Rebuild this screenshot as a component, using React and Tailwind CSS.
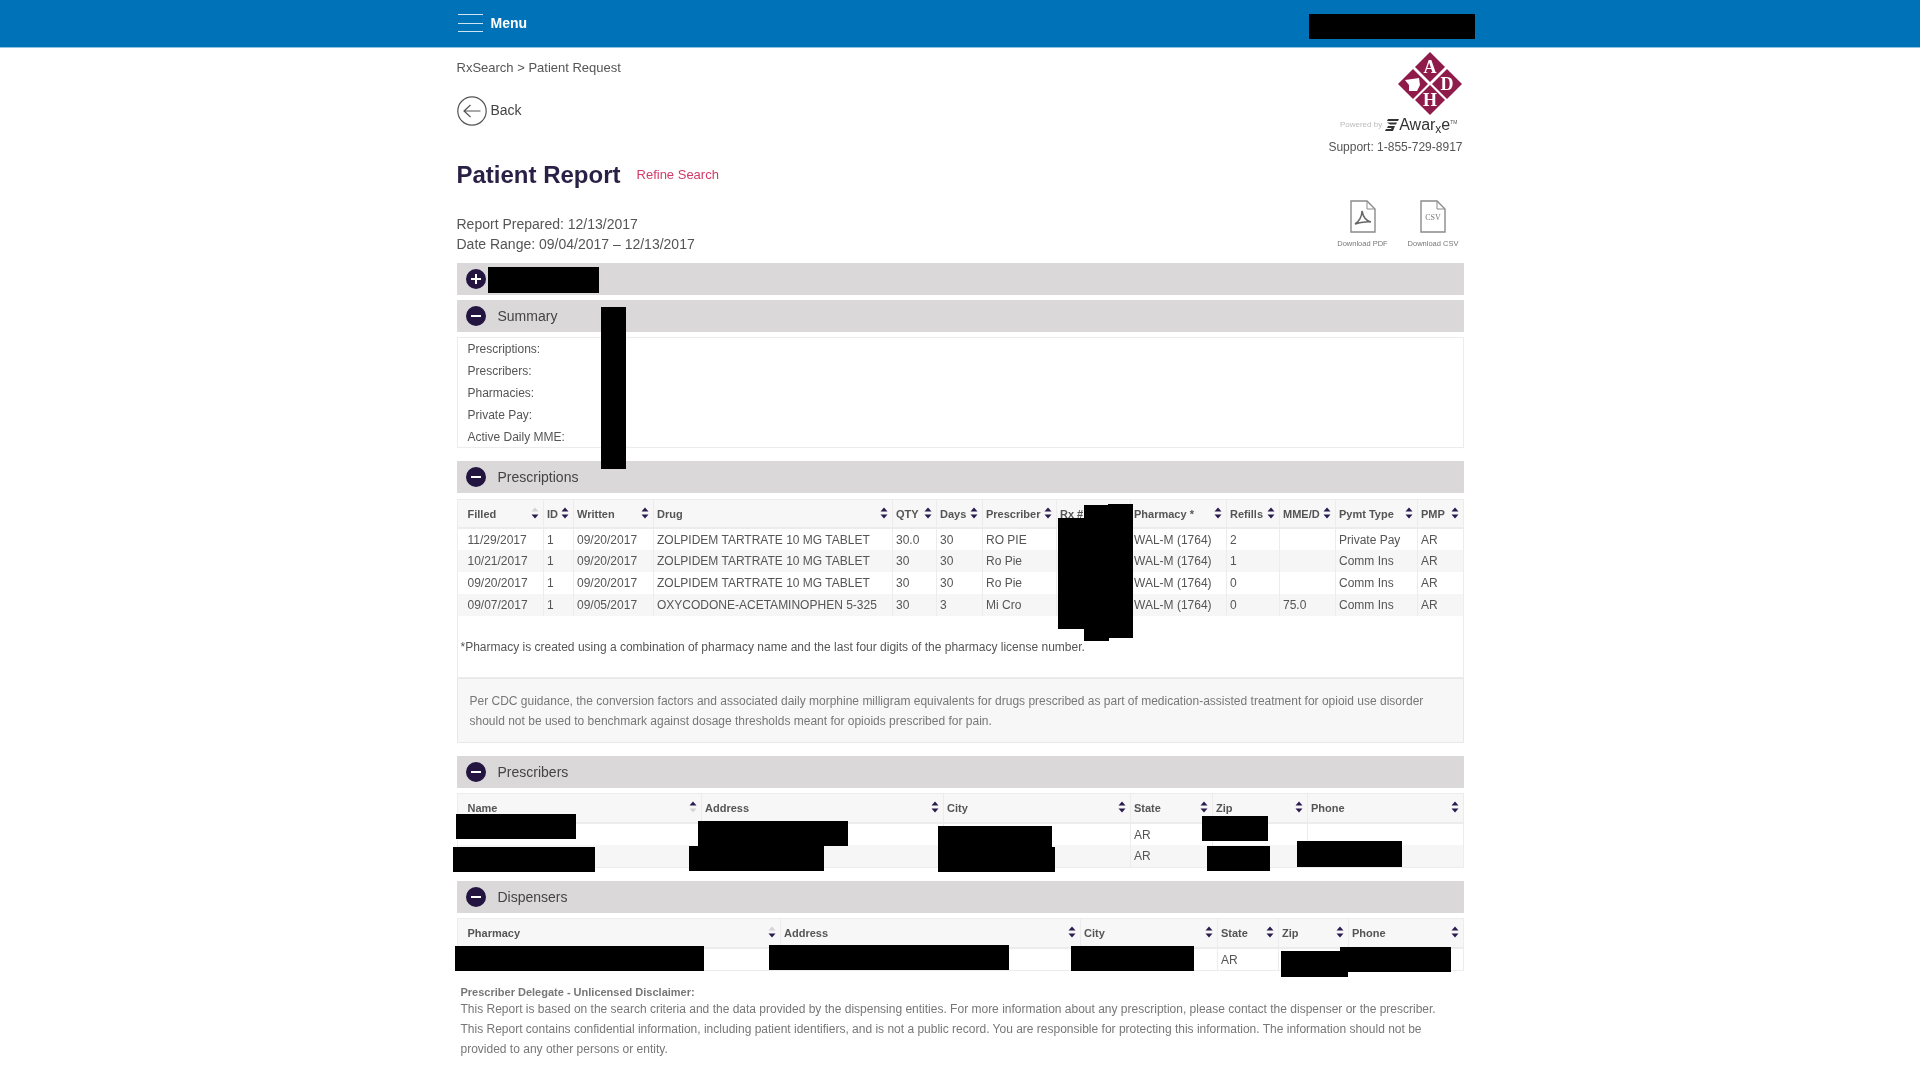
const redactions = [
  "left-[1309px] top-[14px] w-[166px] h-[25px]",
  "left-[488px] top-[267px] w-[111px] h-[26px]",
  "left-[601px] top-[307px] w-[25px] h-[162px]",
  "left-[1058px] top-[518px] w-[26px] h-[111px]",
  "left-[1084px] top-[505px] w-[25px] h-[136px]",
  "left-[1108px] top-[504px] w-[25px] h-[134px]",
  "left-[456px] top-[814px] w-[120px] h-[25px]",
  "left-[453px] top-[847px] w-[142px] h-[25px]",
  "left-[698px] top-[821px] w-[150px] h-[25px]",
  "left-[689px] top-[846px] w-[135px] h-[25px]",
  "left-[938px] top-[826px] w-[114px] h-[22px]",
  "left-[938px] top-[847px] w-[117px] h-[25px]",
  "left-[1202px] top-[816px] w-[66px] h-[25px]",
  "left-[1207px] top-[846px] w-[63px] h-[25px]",
  "left-[1297px] top-[841px] w-[105px] h-[26px]",
  "left-[455px] top-[946px] w-[249px] h-[25px]",
  "left-[769px] top-[945px] w-[240px] h-[25px]",
  "left-[1071px] top-[946px] w-[123px] h-[25px]",
  "left-[1281px] top-[951px] w-[67px] h-[26px]",
  "left-[1340px] top-[947px] w-[111px] h-[25px]",
];

const prescriptionCols = [
  { label: "Filled", w: "w-[86px]", sort: "down" },
  { label: "ID", w: "w-[30px]" },
  { label: "Written", w: "w-[80px]" },
  { label: "Drug", w: "w-[239px]" },
  { label: "QTY", w: "w-[44px]" },
  { label: "Days", w: "w-[46px]" },
  { label: "Prescriber", w: "w-[74px]" },
  { label: "Rx #", w: "w-[74px]" },
  { label: "Pharmacy *", w: "w-[96px]" },
  { label: "Refills", w: "w-[53px]" },
  { label: "MME/D", w: "w-[56px]" },
  { label: "Pymt Type", w: "w-[82px]" },
  { label: "PMP", w: "w-[45px]" },
];

const prescriptionRows = [
  ["11/29/2017", "1", "09/20/2017", "ZOLPIDEM TARTRATE 10 MG TABLET", "30.0", "30", "RO PIE", "", "WAL-M (1764)", "2", "", "Private Pay", "AR"],
  ["10/21/2017", "1", "09/20/2017", "ZOLPIDEM TARTRATE 10 MG TABLET", "30", "30", "Ro Pie", "", "WAL-M (1764)", "1", "", "Comm Ins", "AR"],
  ["09/20/2017", "1", "09/20/2017", "ZOLPIDEM TARTRATE 10 MG TABLET", "30", "30", "Ro Pie", "", "WAL-M (1764)", "0", "", "Comm Ins", "AR"],
  ["09/07/2017", "1", "09/05/2017", "OXYCODONE-ACETAMINOPHEN 5-325", "30", "3", "Mi Cro", "", "WAL-M (1764)", "0", "75.0", "Comm Ins", "AR"],
];

const prescriberCols = [
  { label: "Name", w: "w-[244px]", sort: "up" },
  { label: "Address", w: "w-[242px]" },
  { label: "City", w: "w-[187px]" },
  { label: "State", w: "w-[82px]" },
  { label: "Zip", w: "w-[95px]" },
  { label: "Phone", w: "w-[155px]" },
];

const dispenserCols = [
  { label: "Pharmacy", w: "w-[323px]", sort: "down" },
  { label: "Address", w: "w-[300px]" },
  { label: "City", w: "w-[137px]" },
  { label: "State", w: "w-[61px]" },
  { label: "Zip", w: "w-[70px]" },
  { label: "Phone", w: "w-[114px]" },
];

function SortIcon({ sort }) {
  return (
    <svg width="8" height="12" viewBox="0 0 8 12" className="shrink-0 mb-[3px]">
      <path d="M4 0.5 L7.5 4.5 L0.5 4.5 Z" fill={sort === "down" ? "#d4d4d8" : "#2a1b4e"} />
      <path d="M4 11.5 L7.5 7.5 L0.5 7.5 Z" fill={sort === "up" ? "#d4d4d8" : "#2a1b4e"} />
    </svg>
  );
}

function DataTable({ cols, rows, headHeight = "h-[29px]" }) {
  return (
    <table className="table-fixed border-collapse w-[1005px]">
      <colgroup>
        {cols.map((c) => (
          <col key={c.label} className={c.w} />
        ))}
      </colgroup>
      <thead>
        <tr className={`${headHeight} bg-[#f7f7f7]`}>
          {cols.map((c, i) => (
            <th
              key={c.label}
              className={`p-0 text-left border-r border-b-2 border-[#ececec] last:border-r-0 ${i === 0 ? "pl-[10px]" : "pl-[3px]"} pr-[4px]`}
            >
              <div className="flex items-center justify-between text-[11px] font-bold text-[#555] pt-[1px]">
                <span className="whitespace-nowrap">{c.label}</span>
                <SortIcon sort={c.sort} />
              </div>
            </th>
          ))}
        </tr>
      </thead>
      <tbody>
        {rows.map((row, r) => (
          <tr key={r} className={`h-[22px] ${r % 2 === 1 ? "bg-[#f6f6f6]" : "bg-white"}`}>
            {row.map((cell, i) => (
              <td
                key={i}
                className={`p-0 text-[12px] text-[#555] whitespace-nowrap overflow-hidden border-r border-[#ececec] last:border-r-0 ${i === 0 ? "pl-[10px]" : "pl-[3px]"}`}
              >
                {cell}
              </td>
            ))}
          </tr>
        ))}
      </tbody>
    </table>
  );
}

function SectionHeader({ icon = "minus", title, className = "" }) {
  return (
    <div className={`h-[32px] bg-[#dad8d9] flex items-center pl-[9px] ${className}`}>
      <span className="w-[20px] h-[20px] rounded-full bg-[#231440] flex items-center justify-center relative shrink-0">
        <span className="w-[10px] h-[2px] bg-white" />
        {icon === "plus" && <span className="w-[2px] h-[10px] bg-white absolute" />}
      </span>
      {title && <span className="ml-[12px] text-[14px] text-[#444]">{title}</span>}
    </div>
  );
}

function Logo() {
  return (
    <svg width="66" height="64" viewBox="0 0 66 64" className="mr-[1px]">
      <path d="M33 0 L48 15 L33 30 L18 15 Z" fill="#8f1b4a" />
      <path d="M33 33 L48 48 L33 63 L18 48 Z" fill="#8f1b4a" />
      <path d="M16 17 L31 32 L16 47 L1 32 Z" fill="#8f1b4a" />
      <path d="M50 17 L65 32 L50 47 L35 32 Z" fill="#8f1b4a" />
      <path d="M8 28 L22 26 L23 33 L20 39 L12 39 L12 33 Z" fill="#fff" />
      <text x="33" y="21" textAnchor="middle" fill="#fff" fontFamily="'Liberation Serif', serif" fontSize="18" fontWeight="700">A</text>
      <text x="50" y="38" textAnchor="middle" fill="#fff" fontFamily="'Liberation Serif', serif" fontSize="18" fontWeight="700">D</text>
      <text x="33" y="54" textAnchor="middle" fill="#fff" fontFamily="'Liberation Serif', serif" fontSize="18" fontWeight="700">H</text>
    </svg>
  );
}

function DocIcon({ children }) {
  return (
    <svg width="26" height="33" viewBox="0 0 26 33" fill="none" stroke="#8b8b8b" strokeWidth="1.4">
      <path d="M1 1 H17 L25 9 V32 H1 Z" />
      <path d="M17 1 V9 H25" strokeWidth="1" />
      {children}
    </svg>
  );
}

export default function App() {
  return (
    <div className="relative min-h-screen bg-white overflow-hidden font-['Liberation_Sans',Arial,sans-serif]">
      <div className="blur-[0.6px]">
        {/* top bar */}
        <div className="h-[48px] bg-[#0072b8] border-b border-[#8fc3e4]">
          <div className="w-[1007px] mx-auto flex items-center h-full pl-[1px]">
            <div className="w-[25px] h-[18px] flex flex-col justify-between mt-[-1px]">
              <span className="h-[1px] bg-[#cfe5f3]" />
              <span className="h-[1px] bg-[#cfe5f3]" />
              <span className="h-[1px] bg-[#cfe5f3]" />
            </div>
            <span className="ml-[8px] text-[14px] font-bold text-white mt-[-1px]">Menu</span>
          </div>
        </div>

        <div className="w-[1007px] mx-auto">
          <div className="flex justify-between h-[215px]">
            <div>
              <p className="pt-[10px] text-[13px] leading-[20px] text-[#555]">RxSearch &gt; Patient Request</p>
              <div className="mt-[18px] flex items-center h-[30px]">
                <svg width="30" height="30" viewBox="0 0 30 30" fill="none" stroke="#555" strokeWidth="1.2">
                  <circle cx="15" cy="15" r="14.2" />
                  <path d="M23.5 15 H7 M13.5 9 L7 15 L13.5 21" />
                </svg>
                <span className="ml-[4px] text-[14px] text-[#444] mt-[-2px]">Back</span>
              </div>
              <div className="mt-[33px] flex items-center h-[32px]">
                <h1 className="text-[24px] font-bold text-[#2a1f45]">Patient Report</h1>
                <a className="ml-[16px] text-[13px] text-[#d13a66]">Refine Search</a>
              </div>
              <p className="mt-[23px] text-[14px] leading-[20px] text-[#555]">Report Prepared: 12/13/2017</p>
              <p className="text-[14px] leading-[20px] text-[#555]">Date Range: 09/04/2017 – 12/13/2017</p>
            </div>

            <div className="flex flex-col items-end">
              <div className="mt-[4px]">
                <Logo />
              </div>
              <div className="mt-[1px] h-[16px] flex items-center mr-[6px]">
                <span className="text-[8px] text-[#bbb] mr-[3px]">Powered by</span>
                <svg width="14" height="12" viewBox="0 0 14 12" fill="#333">
                  <path d="M3 0 H14 L13 2 H2 Z M2 3.5 H12 L11 5.5 H5 Z M3 7 H10 L8 12 H0 L1 10 H6 L6.5 9 H2 Z" />
                </svg>
                <span className="text-[16px] leading-none text-[#333]">Awar<span className="text-[12px] relative top-[3px]">x</span>e</span>
                <span className="text-[5px] text-[#555] self-start mt-[2px]">TM</span>
              </div>
              <p className="mt-[5px] mr-[1px] text-[12px] leading-[18px] text-[#555]">Support: 1-855-729-8917</p>
              <div className="mt-[44px] flex gap-[16px] mr-[3px]">
                <div className="flex flex-col items-center w-[54px]">
                  <DocIcon>
                    <path d="M5 24 C9 22 12 16 12 11 C13 16 16 21 21 22 C16 21 9 23 5 24 Z" strokeWidth="1.5" stroke="#666" />
                  </DocIcon>
                  <span className="mt-[6px] text-[7.5px] leading-[10px] text-[#777] whitespace-nowrap">Download PDF</span>
                </div>
                <div className="flex flex-col items-center w-[55px]">
                  <DocIcon>
                    <text x="13" y="20" textAnchor="middle" fontSize="8" fontFamily="'Liberation Serif', serif" fill="#777" stroke="none">CSV</text>
                  </DocIcon>
                  <span className="mt-[6px] text-[7.5px] leading-[10px] text-[#777] whitespace-nowrap">Download CSV</span>
                </div>
              </div>
            </div>
          </div>

          <SectionHeader icon="plus" />
          <SectionHeader title="Summary" className="mt-[5px]" />
          <div className="mt-[5px] h-[111px] border border-[#ececec] pl-[10px] text-[12px] leading-[22px] text-[#555]">
            <p>Prescriptions:</p>
            <p>Prescribers:</p>
            <p>Pharmacies:</p>
            <p>Private Pay:</p>
            <p>Active Daily MME:</p>
          </div>

          <SectionHeader title="Prescriptions" className="mt-[13px]" />
          <div className="mt-[6px] border border-[#ececec]">
            <DataTable cols={prescriptionCols} rows={prescriptionRows} headHeight="h-[28px]" />
            <p className="h-[61px] pt-[22px] pl-[3px] text-[12px] leading-[18px] text-[#555]">
              *Pharmacy is created using a combination of pharmacy name and the last four digits of the pharmacy license number.
            </p>
          </div>
          <div className="h-[65px] border border-[#e8e8e8] bg-[#f7f7f7] px-[12px] pt-[12px] text-[12px] leading-[20px] text-[#777]">
            Per CDC guidance, the conversion factors and associated daily morphine milligram equivalents for drugs prescribed as part of medication-assisted treatment for opioid use disorder
            <br />
            should not be used to benchmark against dosage thresholds meant for opioids prescribed for pain.
          </div>

          <SectionHeader title="Prescribers" className="mt-[13px]" />
          <div className="mt-[5px] border border-[#ececec]">
            <DataTable
              cols={prescriberCols}
              rows={[
                ["", "", "", "AR", "", ""],
                ["", "", "", "AR", "", ""],
              ]}
            />
          </div>

          <SectionHeader title="Dispensers" className="mt-[13px]" />
          <div className="mt-[5px] border border-[#ececec]">
            <DataTable cols={dispenserCols} rows={[["", "", "", "AR", "", ""]]} />
          </div>

          <div className="mt-[15px] pl-[4px] text-[#777]">
            <p className="text-[11px] leading-[13px] font-bold">Prescriber Delegate - Unlicensed Disclaimer:</p>
            <p className="text-[12px] leading-[20px]">
              This Report is based on the search criteria and the data provided by the dispensing entities. For more information about any prescription, please contact the dispenser or the prescriber.
              <br />
              This Report contains confidential information, including patient identifiers, and is not a public record. You are responsible for protecting this information. The information should not be
              <br />
              provided to any other persons or entity.
            </p>
          </div>
        </div>
      </div>

      {/* blacked out patient details */}
      {redactions.map((r) => (
        <div key={r} className={`absolute bg-black ${r}`} />
      ))}
    </div>
  );
}
